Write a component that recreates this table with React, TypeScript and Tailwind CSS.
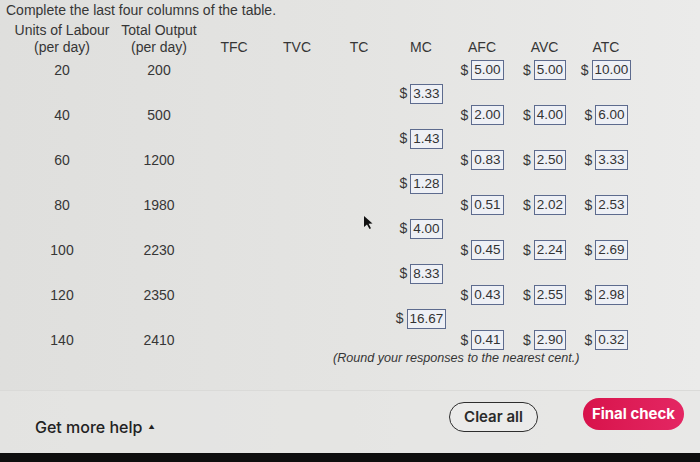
type Row = {
  units: number;
  output: number;
  afc: string;
  avc: string;
  atc: string;
  mc?: string;
};

const rows: Row[] = [
  { units: 20, output: 200, afc: '5.00', avc: '5.00', atc: '10.00', mc: '3.33' },
  { units: 40, output: 500, afc: '2.00', avc: '4.00', atc: '6.00', mc: '1.43' },
  { units: 60, output: 1200, afc: '0.83', avc: '2.50', atc: '3.33', mc: '1.28' },
  { units: 80, output: 1980, afc: '0.51', avc: '2.02', atc: '2.53', mc: '4.00' },
  { units: 100, output: 2230, afc: '0.45', avc: '2.24', atc: '2.69', mc: '8.33' },
  { units: 120, output: 2350, afc: '0.43', avc: '2.55', atc: '2.98', mc: '16.67' },
  { units: 140, output: 2410, afc: '0.41', avc: '2.90', atc: '0.32' },
];

// same column widths for header, data and MC rows
const cols = 'grid grid-cols-[112px_82px_68px_58px_66px_58px_64px_61px_62px] ml-[6px]';

function Money({ value }: { value: string }) {
  return (
    <div className="flex items-center justify-center">
      <span className="mr-[3px] text-[14px]">$</span>
      <span className="inline-flex h-[20px] items-center border border-[#5d6b8e] bg-[#eef0f5] px-[2px] text-[13.5px] leading-none text-[#333]">
        {value}
      </span>
    </div>
  );
}

export default function App() {
  return (
    <div
      className="relative flex h-[462px] w-[700px] flex-col overflow-hidden bg-gradient-to-r from-[#dfdfdd] via-[#e4e4e2] to-[#ebebea] text-[#363636]"
      style={{ fontFamily: '"Liberation Sans", Arial, sans-serif' }}
    >
      <div className="pl-[6px] text-[14px] leading-[20px]">Complete the last four columns of the table.</div>

      {/* Column headers */}
      <div className={`${cols} mt-[2px] text-center text-[14px] leading-[17px]`}>
        <div>Units of Labour</div>
        <div>Total Output</div>
      </div>
      <div className={`${cols} text-center text-[14px] leading-[17px]`}>
        <div>(per day)</div>
        <div>(per day)</div>
        <div>TFC</div>
        <div>TVC</div>
        <div>TC</div>
        <div>MC</div>
        <div>AFC</div>
        <div>AVC</div>
        <div>ATC</div>
      </div>

      <div className="mt-[3px] flex flex-col">
        {rows.map((r) => (
          <div key={r.units} className="flex flex-col">
            <div className={`${cols} h-[22px] items-center text-center text-[14px]`}>
              <div>{r.units}</div>
              <div>{r.output}</div>
              <div />
              <div />
              <div />
              <div />
              <Money value={r.afc} />
              <Money value={r.avc} />
              <Money value={r.atc} />
            </div>
            {r.mc && (
              <div className={`${cols} h-[23px] items-end`}>
                <div />
                <div />
                <div />
                <div />
                <div />
                <Money value={r.mc} />
              </div>
            )}
          </div>
        ))}
      </div>

      <div className="pl-[333px] text-[12.6px] italic leading-[14px]">(Round your responses to the nearest cent.)</div>

      <div className="flex-1" />

      {/* Footer */}
      <div className="flex h-[63px] items-start border-t border-[#dadad8] bg-[#e6e6e4]/60 pl-[35px] pr-[16px]">
        <div
          className="mt-[26px] flex items-center text-[16px] font-medium leading-[20px] text-[#222]"
          style={{ fontFamily: 'Inter, "Liberation Sans", sans-serif' }}
        >
          Get more help
          <span className="ml-[6px] text-[6px]">▲</span>
        </div>
        <div className="flex-1" />
        <button
          className="mt-[11px] flex h-[30px] w-[89px] items-center justify-center rounded-full border-[1.5px] border-[#2e2e2e] bg-[#ebebea] text-[15px] font-semibold text-[#2a2a2a]"
          style={{ fontFamily: 'Inter, "Liberation Sans", sans-serif' }}
        >
          Clear all
        </button>
        <button
          className="ml-[45px] mt-[7px] flex h-[32px] w-[101px] items-center justify-center rounded-full bg-gradient-to-r from-[#d8124b] to-[#e42663] text-[15px] font-bold text-white"
          style={{ fontFamily: 'Inter, "Liberation Sans", sans-serif' }}
        >
          Final check
        </button>
      </div>
      <div className="h-[9px] bg-[#0e0e0e]" />

      {/* mouse pointer captured in the shot */}
      <svg className="absolute left-[363px] top-[215px]" width="11" height="15" viewBox="0 0 11 15">
        <path d="M1 1 L1 12 L4 9.5 L6.5 14 L8 13.2 L5.6 8.8 L9.5 8.5 Z" fill="#111" />
      </svg>
    </div>
  );
}
